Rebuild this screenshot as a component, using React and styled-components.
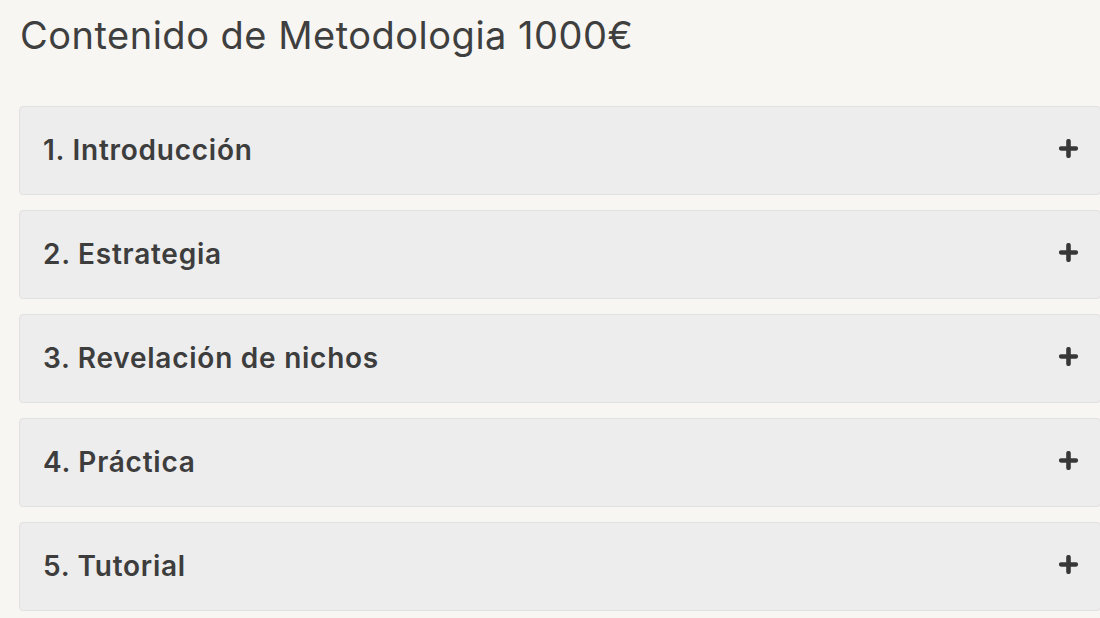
import React from 'react';
import styled, { createGlobalStyle } from 'styled-components';

const GlobalStyle = createGlobalStyle`
  html, body {
    margin: 0;
    padding: 0;
    background: #f7f6f3;
    overflow: hidden;
  }
  body {
    font-family: Inter, "Noto Sans", sans-serif;
    color: #3b3b3b;
  }
`;

const Page = styled.div`
  width: 1100px;
  height: 618px;
  padding: 10px 0 0 19px;
  box-sizing: border-box;
`;

const Title = styled.h2`
  margin: 0 0 0 1px;
  font-size: 38px;
  line-height: 50px;
  font-weight: 400;
  color: #3f3f3f;
  letter-spacing: 0.5px;
`;

const List = styled.div`
  display: flex;
  flex-direction: column;
  gap: 15px;
  margin-top: 46px;
  width: 1082px;
`;

const Item = styled.div`
  display: flex;
  align-items: center;
  justify-content: space-between;
  height: 89px;
  box-sizing: border-box;
  padding: 0 22px 1px 23px;
  background: #ededed;
  border: 1px solid #e1e1e1;
  border-radius: 4px;
  cursor: pointer;
`;

const ItemTitle = styled.span`
  font-size: 28px;
  font-weight: 600;
  color: #3d3d3d;
  letter-spacing: 0.75px;
`;

const Plus = styled.svg`
  width: 19px;
  height: 19px;
  flex: none;
  margin-bottom: 3px;
`;

const sections = [
  '1. Introducción',
  '2. Estrategia',
  '3. Revelación de nichos',
  '4. Práctica',
  '5. Tutorial',
];

function PlusIcon() {
  return (
    <Plus viewBox="0 0 19 19">
      <path d="M9.5 2.2v14.6M2.2 9.5h14.6" stroke="#383838" strokeWidth="4.6" strokeLinecap="round" />
    </Plus>
  );
}

export default function App() {
  return (
    <>
      <GlobalStyle />
      <Page>
        <Title>Contenido de Metodologia 1000€</Title>
        <List>
          {sections.map((s) => (
            <Item key={s}>
              <ItemTitle>{s}</ItemTitle>
              <PlusIcon />
            </Item>
          ))}
        </List>
      </Page>
    </>
  );
}
